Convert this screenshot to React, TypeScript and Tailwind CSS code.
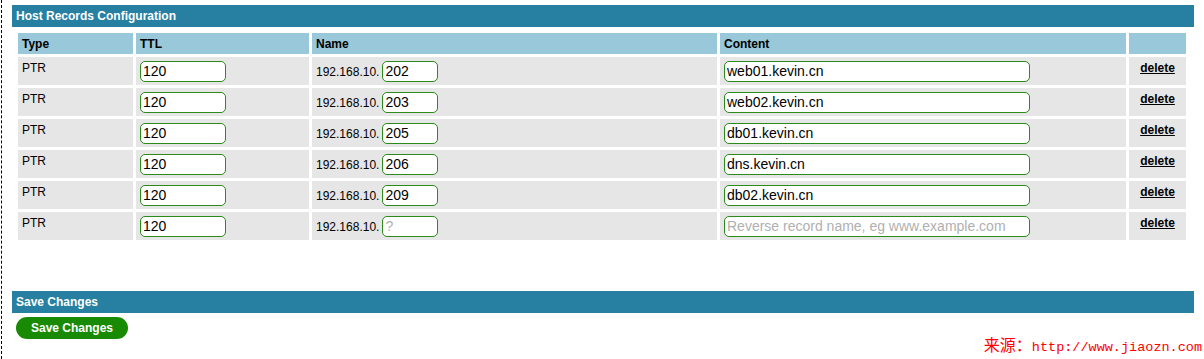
import React from "react";

const records = [
  { ttl: "120", host: "202", content: "web01.kevin.cn" },
  { ttl: "120", host: "203", content: "web02.kevin.cn" },
  { ttl: "120", host: "205", content: "db01.kevin.cn" },
  { ttl: "120", host: "206", content: "dns.kevin.cn" },
  { ttl: "120", host: "209", content: "db02.kevin.cn" },
  { ttl: "120", host: "", content: "" },
];

const inputCls =
  "h-[21px] rounded-[5px] border border-[#2a8a1a] bg-white px-[2px] text-[14px] text-black outline-none placeholder:text-[#b0b0b0]";

export default function App() {
  return (
    <div
      className="relative h-[359px] w-[1204px] bg-white text-[12px] text-black"
      style={{ fontFamily: '"Liberation Sans", Arial, sans-serif' }}
    >
      <div className="ml-px h-full border-l border-dashed border-black pt-[5px]">
        <div className="ml-[10px] flex h-[22px] w-[1182px] items-center bg-[#2780a2] pl-[4px] text-[12px] font-bold text-white">
          Host Records Configuration
        </div>

        <div className="ml-[16px] mt-[6px] grid grid-cols-[115px_173px_405px_406px_57px] gap-[3px]">
          {["Type", "TTL", "Name", "Content", ""].map((h, i) => (
            <div key={i} className="flex h-[21px] items-center bg-[#98c8d9] pl-[4px] font-bold">
              {h}
            </div>
          ))}
          {records.map((r, i) => (
            <React.Fragment key={i}>
              <div className="h-[28px] bg-[#e6e6e6] pl-[4px] pt-[2px]">PTR</div>
              <div className="h-[28px] bg-[#e6e6e6] pl-[4px] pt-[4px]">
                <input className={`${inputCls} w-[86px]`} defaultValue={r.ttl} />
              </div>
              <div className="flex h-[28px] items-start bg-[#e6e6e6] pl-[4px] pt-[4px]">
                <span className="mr-[3px] mt-[5px] leading-none">192.168.10.</span>
                <input className={`${inputCls} w-[56px]`} defaultValue={r.host} placeholder="?" />
              </div>
              <div className="h-[28px] bg-[#e6e6e6] pl-[4px] pt-[4px]">
                <input
                  className={`${inputCls} w-[306px]`}
                  defaultValue={r.content}
                  placeholder="Reverse record name, eg www.example.com"
                />
              </div>
              <div className="h-[28px] bg-[#e6e6e6] pt-[2px] text-center">
                <a href="#" className="font-bold text-black underline">
                  delete
                </a>
              </div>
            </React.Fragment>
          ))}
        </div>

        <div className="ml-[10px] mt-[51px] flex h-[22px] w-[1182px] items-center bg-[#2780a2] pl-[4px] text-[12px] font-bold text-white">
          Save Changes
        </div>
        <button className="ml-[14px] mt-[4px] h-[22px] w-[112px] rounded-full bg-[#198a04] text-[12px] font-bold text-white">
          Save Changes
        </button>
      </div>

      <div className="absolute bottom-[1px] right-[2px] flex items-baseline text-[#ff0000]">
        <span className="text-[16px]" style={{ fontFamily: '"Noto Sans CJK SC", serif' }}>
          来源：
        </span>
        <span className="text-[13.5px]" style={{ fontFamily: '"Liberation Mono", monospace' }}>
          http://www.jiaozn.com
        </span>
      </div>
    </div>
  );
}
